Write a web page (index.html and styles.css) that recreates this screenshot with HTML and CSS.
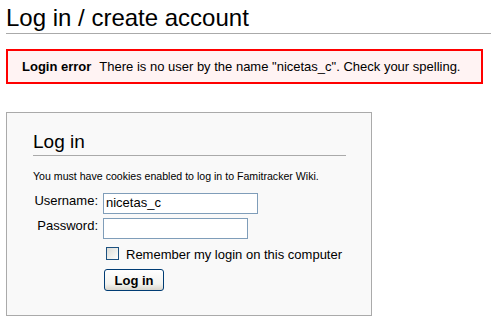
FILE: index.html
```html
<!DOCTYPE html>
<html lang="en">
<head>
    <meta charset="UTF-8">
    <title>Log in / create account - Famitracker Wiki</title>
    <meta name="viewport" content="width=device-width, initial-scale=1.0">
    <link rel="stylesheet" href="styles.css">
</head>
<body>
    <div class="page">
        <h1 class="page-title">Log in / create account</h1>

        <div class="error-box">
            <span class="error-title">Login error</span>There is no user by the name "nicetas_c". Check your spelling.
        </div>

        <form class="login-box" onsubmit="return false">
            <h2 class="login-title">Log in</h2>
            <p class="login-note">You must have cookies enabled to log in to Famitracker Wiki.</p>
            <div class="login-fields">
                <label class="field-label" for="wpName">Username:</label>
                <input class="field-input username" id="wpName" type="text" value="nicetas_c">

                <label class="field-label" for="wpPassword">Password:</label>
                <input class="field-input password" id="wpPassword" type="password">

                <div class="remember-row">
                    <input class="remember-box" id="wpRemember" type="checkbox">
                    <label for="wpRemember">Remember my login on this computer</label>
                </div>

                <div class="actions">
                    <button class="login-btn" type="submit">Log in</button>
                </div>
            </div>
        </form>
    </div>
</body>
</html>
```

FILE: styles.css
```css
:root {
    --text: #000000;
    --rule: #aaaaaa;
    --box-bg: #f9f9f9;
    --error-red: #ff0000;
    --error-bg: #fff3f3;
    --input-border: #7f9db9;
    --button-border: #003c74;
}

body {
    margin: 0;
    font-family: "Liberation Sans", Arial, sans-serif;
    color: var(--text);
    background: #ffffff;
}

.page {
    padding: 0 0 0 6px;
}

.page-title {
    margin: 4px 0 0 0;
    padding-bottom: 1px;
    font-size: 24px;
    font-weight: normal;
    line-height: 28px;
    border-bottom: 1px solid var(--rule);
}

.error-box {
    margin: 15px 8px 0 0;
    padding: 8px 14px 7px 14px;
    border: 2px solid var(--error-red);
    background: var(--error-bg);
    font-size: 13px;
    line-height: 16px;
}

.error-title {
    font-weight: bold;
    margin-right: 8px;
}

.login-box {
    box-sizing: border-box;
    width: 366px;
    margin-top: 28px;
    padding: 18px 25px 24px 26px;
    border: 1px solid var(--rule);
    background: var(--box-bg);
}

.login-title {
    margin: 0;
    padding-bottom: 2px;
    font-size: 19px;
    font-weight: normal;
    line-height: 22px;
    border-bottom: 1px solid var(--rule);
}

.login-note {
    margin: 14px 0 0 0;
    font-size: 10.6px;
    line-height: 13px;
}

.login-fields {
    display: grid;
    grid-template-columns: 65px auto;
    column-gap: 5px;
    row-gap: 4px;
    align-items: start;
    justify-items: start;
    margin-top: 10px;
    font-size: 13px;
    line-height: 16px;
}

.field-label {
    justify-self: end;
}

.field-input {
    box-sizing: border-box;
    height: 21px;
    margin: 0;
    padding: 0 2px 2px 2px;
    border: 1px solid var(--input-border);
    background: #ffffff;
    font-family: inherit;
    font-size: 13px;
    color: var(--text);
    outline: none;
}
.username {
    width: 155px;
}
.password {
    width: 145px;
}

.remember-row {
    grid-column: 2;
    display: flex;
    align-items: flex-start;
    margin-top: 4px;
}

.remember-box {
    appearance: none;
    box-sizing: border-box;
    width: 13px;
    height: 13px;
    margin: 0 7px 0 3px;
    border: 1px solid #1c5180;
    background: linear-gradient(135deg, #dcdcd7 0%, #f4f4f0 70%, #ffffff 100%);
}

.actions {
    grid-column: 2;
    margin-top: 2px;
}

.login-btn {
    box-sizing: border-box;
    height: 22px;
    margin: 0 0 0 1px;
    padding: 0 9.5px;
    border: 1px solid var(--button-border);
    border-radius: 3px;
    background: linear-gradient(180deg, #ffffff 0%, #f3f3ef 70%, #d9d5cc 100%);
    font-family: inherit;
    font-size: 13px;
    font-weight: bold;
    color: var(--text);
    cursor: pointer;
}
```
